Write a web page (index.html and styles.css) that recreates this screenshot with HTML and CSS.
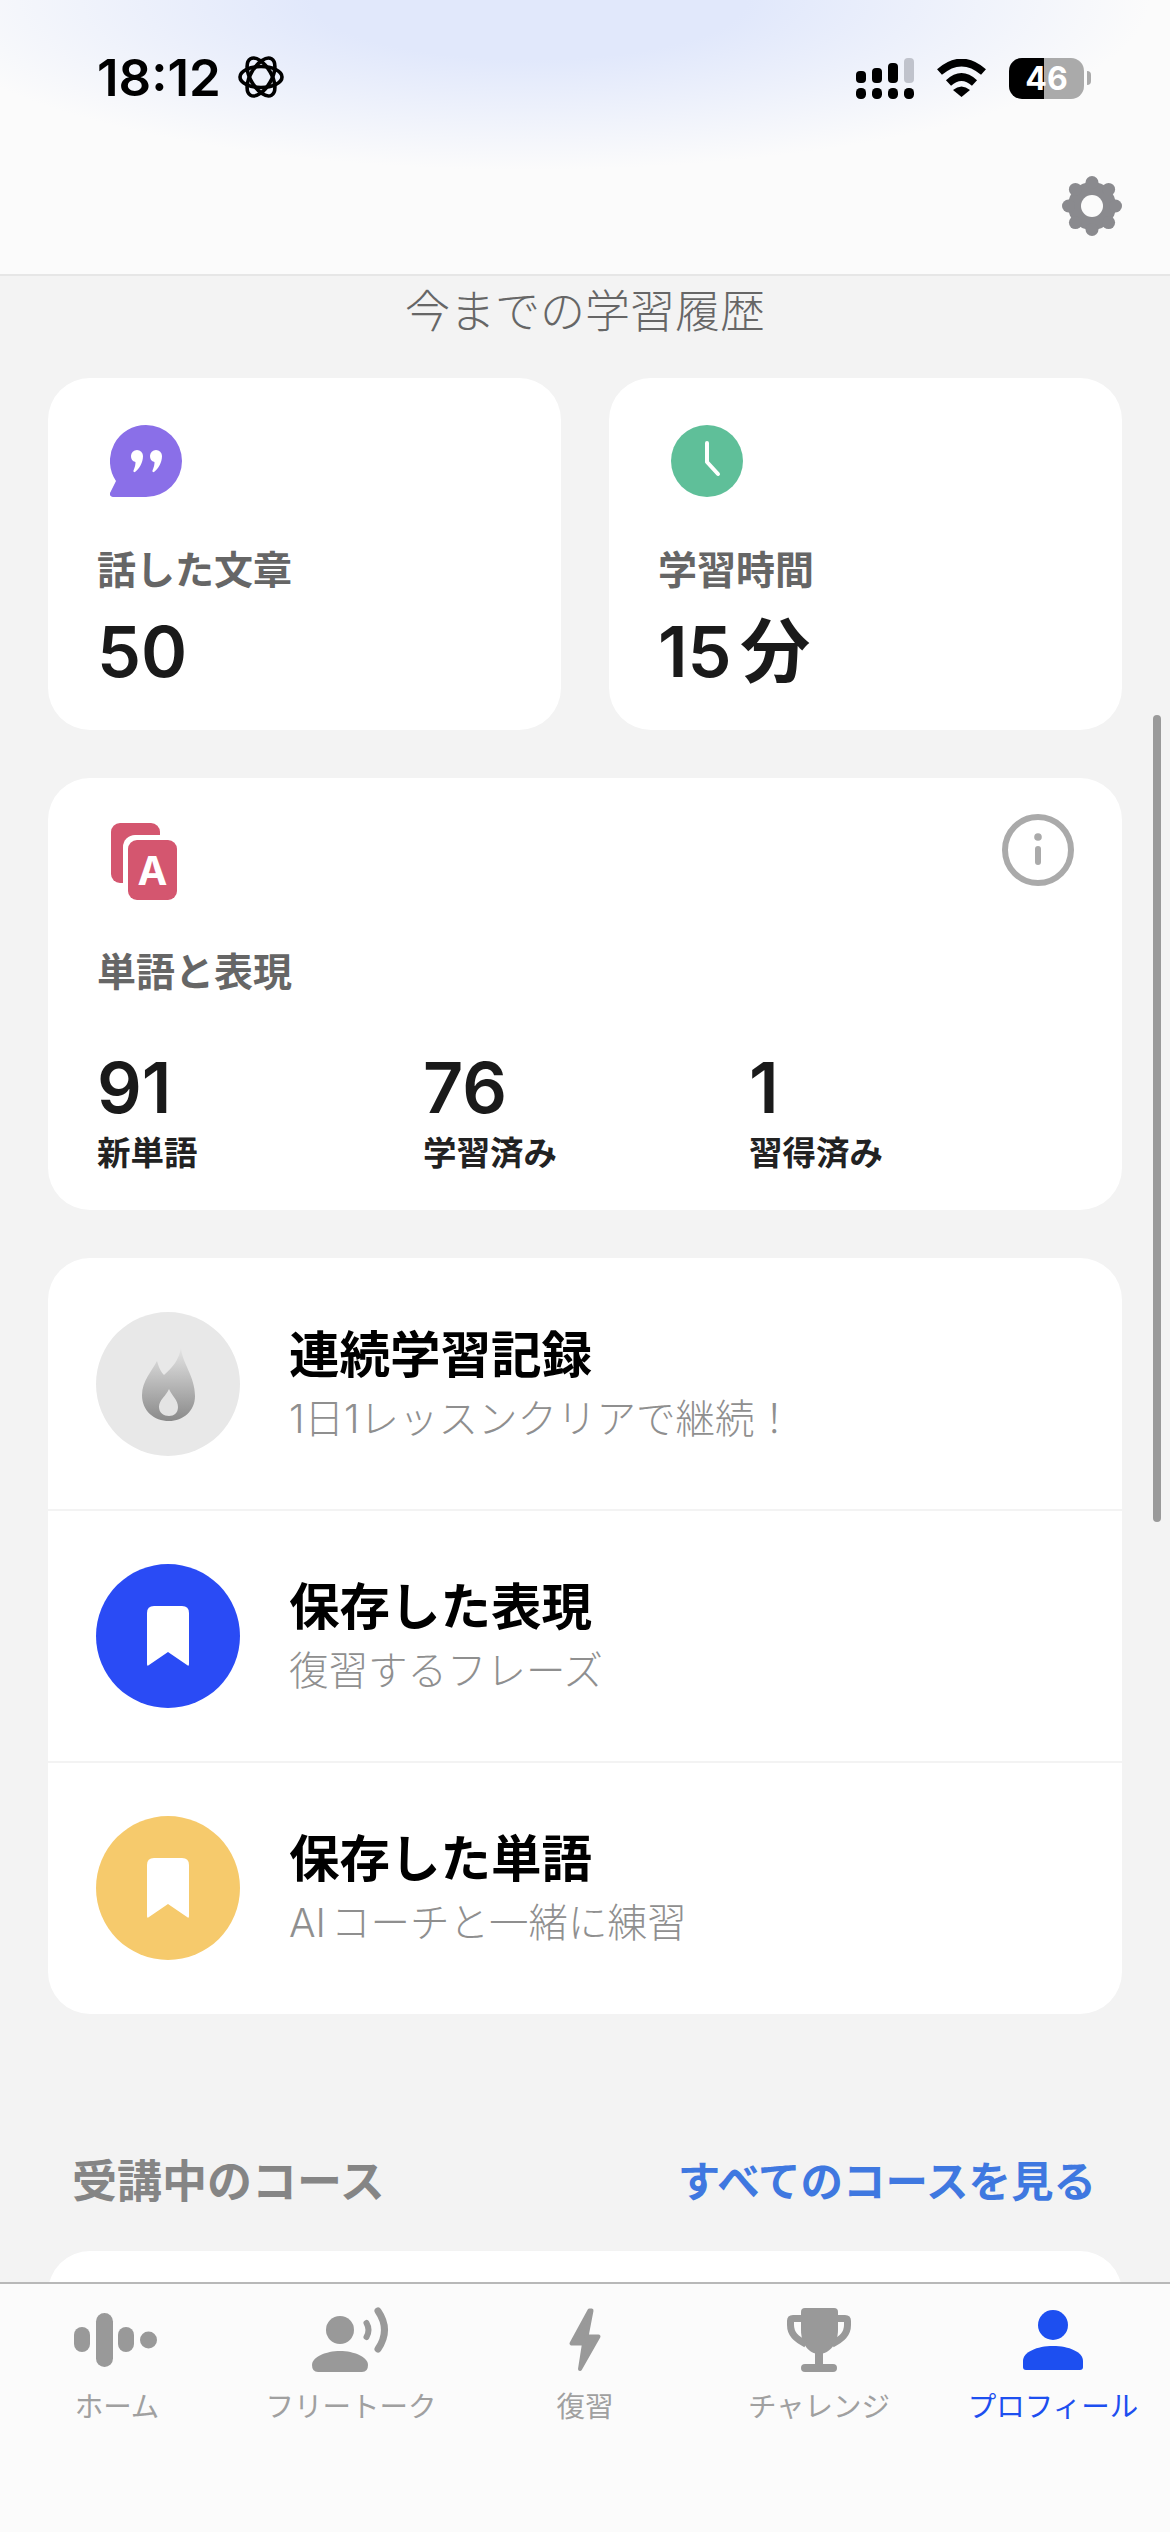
FILE: index.html
```html
<!DOCTYPE html>
<html lang="ja">
<head>
<meta charset="utf-8">
<title>プロフィール</title>
<link rel="stylesheet" href="styles.css">
</head>
<body>
<div class="screen">
  <header class="top">
    <div class="status">
      <span class="time">18:12</span>
      <svg class="orbit" width="46" height="44" viewBox="0 0 46 44"><g fill="none" stroke="#000" stroke-width="3.600"><ellipse cx="23" cy="22" rx="21" ry="10.500"/><ellipse cx="23" cy="22" rx="21" ry="10.500" transform="rotate(60 23 22)"/><ellipse cx="23" cy="22" rx="21" ry="10.500" transform="rotate(120 23 22)"/></g></svg>
      <svg class="signal" width="58" height="41" viewBox="0 0 58 41"><rect x="0" y="13" width="10" height="12" rx="4"/><rect x="16" y="10" width="10" height="15" rx="4"/><rect x="32" y="5" width="10" height="20" rx="4"/><rect x="48" y="0" width="10" height="25" rx="4" fill="#c0c3cc"/><rect x="0" y="30" width="10" height="11" rx="4.500"/><rect x="16" y="30" width="10" height="11" rx="4.500"/><rect x="32" y="30" width="10" height="11" rx="4.500"/><rect x="48" y="30" width="10" height="11" rx="4.500"/></svg>
      <svg class="wifi" width="51" height="38" viewBox="0 0 51 38"><path d="M3.500 13Q25.500-6 47.500 13" fill="none" stroke="#000" stroke-width="7.500"/><path d="M12.500 24Q25.500 12 38.500 24" fill="none" stroke="#000" stroke-width="7.500"/><path d="M17 31Q25.500 24 34 31L25.500 38Z"/></svg>
      <div class="battery"><span>46</span></div>
      <span class="nub"></span>
    </div>
    <div class="gear-row">
      <svg width="60" height="60" viewBox="0 0 60 60"><g fill="#8a8a8e"><circle cx="30" cy="30" r="24"/><circle cx="30" cy="6.500" r="6.500"/><circle cx="53.500" cy="30" r="6.500"/><circle cx="30" cy="53.500" r="6.500"/><circle cx="6.500" cy="30" r="6.500"/><circle cx="46.600" cy="13.400" r="6.500"/><circle cx="46.600" cy="46.600" r="6.500"/><circle cx="13.400" cy="46.600" r="6.500"/><circle cx="13.400" cy="13.400" r="6.500"/></g><circle cx="30" cy="30" r="11" fill="#fbfbfb"/></svg>
    </div>
  </header>

  <main class="content">
    <h1 class="page-title">今までの学習履歴</h1>

    <div class="stat-grid">
      <section class="card stat">
        <svg class="stat-icon" width="72" height="72" viewBox="0 0 72 72"><path d="M36 0A36 36 0 1 1 36 72H3C0 72-1 69 .5 67L6 56A36 36 0 0 1 36 0Z" fill="#8a6fe8"/><g fill="#fff"><path d="M21 31a6 6 0 1 1 12 0C33 38 29 44 25 47C24 47.500 23 46.500 23.500 45.500C25 42 25.500 40 25.500 37A6 6 0 0 1 21 31Z"/><path d="M40 31a6 6 0 1 1 12 0C52 38 48 44 44 47C43 47.500 42 46.500 42.500 45.500C44 42 44.500 40 44.500 37A6 6 0 0 1 40 31Z"/></g></svg>
        <div class="label">話した文章</div>
        <div class="value">50</div>
      </section>
      <section class="card stat">
        <svg class="stat-icon" width="72" height="72" viewBox="0 0 72 72"><circle cx="36" cy="36" r="36" fill="#5fbf99"/><path d="M36 18V37L47 49" fill="none" stroke="#fff" stroke-width="4" stroke-linecap="round" stroke-linejoin="round"/></svg>
        <div class="label">学習時間</div>
        <div class="value value-unit">15 分</div>
      </section>
    </div>

    <section class="card vocab">
      <div class="vocab-head">
        <svg class="vocab-icon" width="67" height="77" viewBox="0 0 67 77"><rect x="1" y="0" width="49" height="60" rx="9" fill="#d4566f"/><rect x="13" y="12" width="54" height="65" rx="12" fill="#fff"/><rect x="18" y="17" width="49" height="60" rx="9" fill="#d4566f"/><text class="vocab-a" x="42.500" y="62" text-anchor="middle">A</text></svg>
        <svg class="info" width="72" height="72" viewBox="0 0 72 72"><circle cx="36" cy="36" r="33" fill="none" stroke="#aaa" stroke-width="6"/><circle cx="36" cy="23" r="3.800" fill="#aaa"/><rect x="33" y="32" width="6" height="19" rx="3" fill="#aaa"/></svg>
      </div>
      <div class="label">単語と表現</div>
      <div class="vocab-stats">
        <div><div class="value">91</div><div class="sublabel">新単語</div></div>
        <div><div class="value">76</div><div class="sublabel">学習済み</div></div>
        <div><div class="value">1</div><div class="sublabel">習得済み</div></div>
      </div>
    </section>

    <section class="card list">
      <div class="row">
        <div class="badge badge-grey">
          <svg width="53" height="73" viewBox="0 0 53 73"><defs><linearGradient id="flame" x1="0" y1="0" x2="0" y2="1"><stop offset="0" stop-color="#e4e4e4"/><stop offset="1" stop-color="#8a8a8a"/></linearGradient></defs><path d="M39 0C40 15 53 28 53 48C53 63 41 73 27 73C12 73 0 63 0 47C0 33 10 23 15 13C17 20 19 24 22 27C30 20 37 12 39 0Z" fill="url(#flame)"/><path d="M27 41C30 48 36 52 36 59C36 65 32 68 27 68C22 68 17 65 17 59C17 52 24 48 27 41Z" fill="#e4e4e4"/></svg>
        </div>
        <div class="row-text"><div class="row-title">連続学習記録</div><div class="row-sub">1日1レッスンクリアで継続！</div></div>
      </div>
      <div class="row">
        <div class="badge badge-blue">
          <svg width="42" height="60" viewBox="0 0 42 60"><path d="M0 7Q0 0 7 0H35Q42 0 42 7V58Q42 61 40 59L21 46L2 59Q0 61 0 58Z" fill="#fff"/></svg>
        </div>
        <div class="row-text"><div class="row-title">保存した表現</div><div class="row-sub">復習するフレーズ</div></div>
      </div>
      <div class="row">
        <div class="badge badge-yellow">
          <svg width="42" height="60" viewBox="0 0 42 60"><path d="M0 7Q0 0 7 0H35Q42 0 42 7V58Q42 61 40 59L21 46L2 59Q0 61 0 58Z" fill="#fff"/></svg>
        </div>
        <div class="row-text"><div class="row-title">保存した単語</div><div class="row-sub">AI コーチと一緒に練習</div></div>
      </div>
    </section>

    <div class="section-head">
      <h2 class="section-title">受講中のコース</h2>
      <a class="section-link">すべてのコースを見る</a>
    </div>
    <section class="card course"></section>
  </main>

  <nav class="tabs">
    <div class="tab">
      <svg width="86" height="66" viewBox="0 0 86 66"><g fill="#999"><rect x="0" y="19" width="16" height="25" rx="8"/><rect x="22" y="5" width="17" height="54" rx="8.500"/><rect x="44" y="19" width="16" height="25" rx="8"/><circle cx="74.500" cy="32" r="8.500"/></g></svg>
      <span class="tab-label">ホーム</span>
    </div>
    <div class="tab">
      <svg width="78" height="66" viewBox="0 0 78 66"><g fill="#999"><circle cx="28" cy="22" r="14"/><path d="M0 57C0 49 14 43 28 43C42 43 56 49 56 57Q56 64 50 64H6Q0 64 0 57Z"/></g><g fill="none" stroke="#999" stroke-linecap="round"><path d="M54.500 15Q58.500 22 54.500 29" stroke-width="6"/><path d="M66 3Q79 22 66 41" stroke-width="7"/></g></svg>
      <span class="tab-label">フリートーク</span>
    </div>
    <div class="tab">
      <svg width="32" height="66" viewBox="0 0 32 66"><path d="M20.500 2.500L2.500 35.500H15L11 61L29.500 28.500H17.500L22.500 2.500Z" fill="#999" stroke="#999" stroke-width="4" stroke-linejoin="round"/></svg>
      <span class="tab-label">復習</span>
    </div>
    <div class="tab">
      <svg width="64" height="66" viewBox="0 0 64 66"><path d="M14 4Q14 0 18 0H47Q51 0 51 4V22C51 36 42 46 32 46C22 46 14 36 14 22Z" fill="#999"/><path d="M15 10.500H6Q3.500 10.500 3.500 13V17C3.500 26 9 31 19 36M49 10.500H58Q60.500 10.500 60.500 13V17C60.500 26 55 31 45 36" fill="none" stroke="#999" stroke-width="7"/><rect x="28" y="44" width="8" height="14" fill="#999"/><rect x="14" y="56" width="36" height="8" rx="4" fill="#999"/></svg>
      <span class="tab-label">チャレンジ</span>
    </div>
    <div class="tab tab-active">
      <svg width="60" height="66" viewBox="0 0 60 66"><g fill="#1d4ff0"><ellipse cx="30" cy="17" rx="15" ry="15"/><path d="M0 53C0 44 14 38 30 38C46 38 60 44 60 53V59Q60 62 57 62H3Q0 62 0 59Z"/></g></svg>
      <span class="tab-label">プロフィール</span>
    </div>
  </nav>

  <div class="scrollbar"></div>
</div>
</body>
</html>
```
FILE: styles.css
```css
* { box-sizing: border-box; }
html, body { margin: 0; padding: 0; }
body {
  width: 1170px;
  height: 2532px;
  overflow: hidden;
  background: #f3f3f3;
  font-family: "Inter", "Noto Sans CJK JP", sans-serif;
}
.screen {
  position: relative;
  width: 1170px;
  height: 2532px;
  display: flex;
  flex-direction: column;
  overflow: hidden;
}

/* header */
.top {
  flex: none;
  height: 276px;
  border-bottom: 2px solid #e6e6e6;
  background: radial-gradient(ellipse 620px 170px at 530px 0, #e1e8fb 35%, rgba(251,251,251,0) 100%), #fbfbfb;
}
.status {
  height: 56px;
  margin-top: 50px;
  padding: 0 79px 0 97px;
  display: flex;
  align-items: center;
}
.time {
  font-size: 51px;
  font-weight: 600;
  line-height: 56px;
  color: #000;
}
.orbit { margin-left: 17px; margin-top: -2px; }
.signal { margin-left: auto; }
.wifi { margin-left: 22px; }
.battery {
  margin-left: 22px;
  width: 75px;
  height: 41px;
  border-radius: 13px;
  background: linear-gradient(90deg, #000 0 35px, #aaa 35px);
  display: flex;
  align-items: center;
  justify-content: center;
  color: #fff;
  font-size: 32px;
  font-weight: 700;
}
.nub {
  margin-left: 3px;
  width: 4px;
  height: 14px;
  background: #aaa;
  border-radius: 0 4px 4px 0;
}
.gear-row {
  margin-top: 70px;
  padding-right: 48px;
  display: flex;
  justify-content: flex-end;
}

/* content */
.content {
  flex: 1;
  min-height: 0;
  overflow: hidden;
  padding: 6px 48px 0;
}
.page-title {
  margin: 0 0 36px;
  text-align: center;
  font-size: 45px;
  line-height: 60px;
  font-weight: 300;
  color: #666;
}
.card {
  background: #fff;
  border-radius: 42px;
}
.stat-grid {
  display: grid;
  grid-template-columns: 513px 513px;
  gap: 48px;
}
.stat {
  height: 352px;
  padding: 47px 50px 0 49px;
}
.stat-icon { display: block; margin: 0 0 48px 13px; }
.label {
  font-size: 39px;
  line-height: 50px;
  font-weight: 600;
  color: #666;
}
.value {
  margin-top: 17px;
  font-size: 70px;
  line-height: 80px;
  font-weight: 600;
  color: #1a1a1a;
}
.value-unit { word-spacing: -9px; }
.vocab {
  margin-top: 48px;
  height: 432px;
  padding: 45px 50px 0 49px;
}
.vocab-head {
  display: flex;
  justify-content: space-between;
  align-items: flex-start;
  height: 77px;
  margin-bottom: 47px;
}
.vocab-icon { display: block; margin-left: 13px; }
.vocab-a {
  font-size: 40px;
  font-weight: 700;
  fill: #fff;
}
.info { display: block; margin-top: -9px; margin-right: -2px; }
.vocab-stats {
  display: grid;
  grid-template-columns: 326px 326px 326px;
  margin-top: 51px;
}
.vocab-stats .value { margin-top: 0; }
.sublabel {
  margin-top: 3px;
  font-size: 33.500px;
  line-height: 44px;
  font-weight: 600;
  color: #222;
}
.list {
  margin-top: 48px;
  padding-bottom: 1px;
  overflow: hidden;
}
.row {
  height: 252px;
  padding-left: 48px;
  display: flex;
  align-items: center;
  gap: 49px;
  border-top: 2px solid #f3f3f3;
}
.row:first-child {
  height: 251px;
  padding-top: 1px;
  border-top: 0;
}
.badge {
  width: 144px;
  height: 144px;
  border-radius: 50%;
  flex: none;
  display: flex;
  align-items: center;
  justify-content: center;
}
.badge-grey { background: #e8e8e8; }
.badge-blue { background: #2a4bf5; }
.badge-yellow { background: #f6ca6c; }
.row-text { padding-top: 4px; }
.row-title {
  font-size: 50.500px;
  line-height: 66px;
  font-weight: 600;
  color: #000;
}
.row-sub {
  font-size: 39.500px;
  line-height: 62px;
  font-weight: 300;
  word-spacing: -6px;
  color: #8f8f8f;
}
.section-head {
  margin-top: 138px;
  padding: 0 26px 0 24px;
  display: flex;
  justify-content: space-between;
  align-items: center;
  height: 60px;
}
.section-title {
  margin: 0;
  font-size: 45px;
  line-height: 60px;
  font-weight: 600;
  color: #858585;
}
.section-link {
  font-size: 42.500px;
  line-height: 60px;
  font-weight: 600;
  color: #3f78e0;
}
.course {
  margin-top: 39px;
  height: 200px;
}

/* tab bar */
.tabs {
  flex: none;
  height: 250px;
  border-top: 2px solid #b8b8b8;
  background: #fbfbfb;
  padding-top: 24px;
  display: grid;
  grid-template-columns: repeat(5, 234px);
  align-items: start;
}
.tab {
  display: flex;
  flex-direction: column;
  align-items: center;
}
.tab svg { display: block; overflow: visible; }
.tab-label {
  margin-top: 15px;
  font-size: 28.500px;
  line-height: 36px;
  color: #a0a0a0;
  white-space: nowrap;
}
.tab-active .tab-label { color: #1d4ff0; }

/* scroll indicator floats over the content */
.scrollbar {
  position: absolute;
  left: 1153px;
  top: 715px;
  width: 8px;
  height: 807px;
  border-radius: 4px;
  background: #9a9a9a;
}
```
